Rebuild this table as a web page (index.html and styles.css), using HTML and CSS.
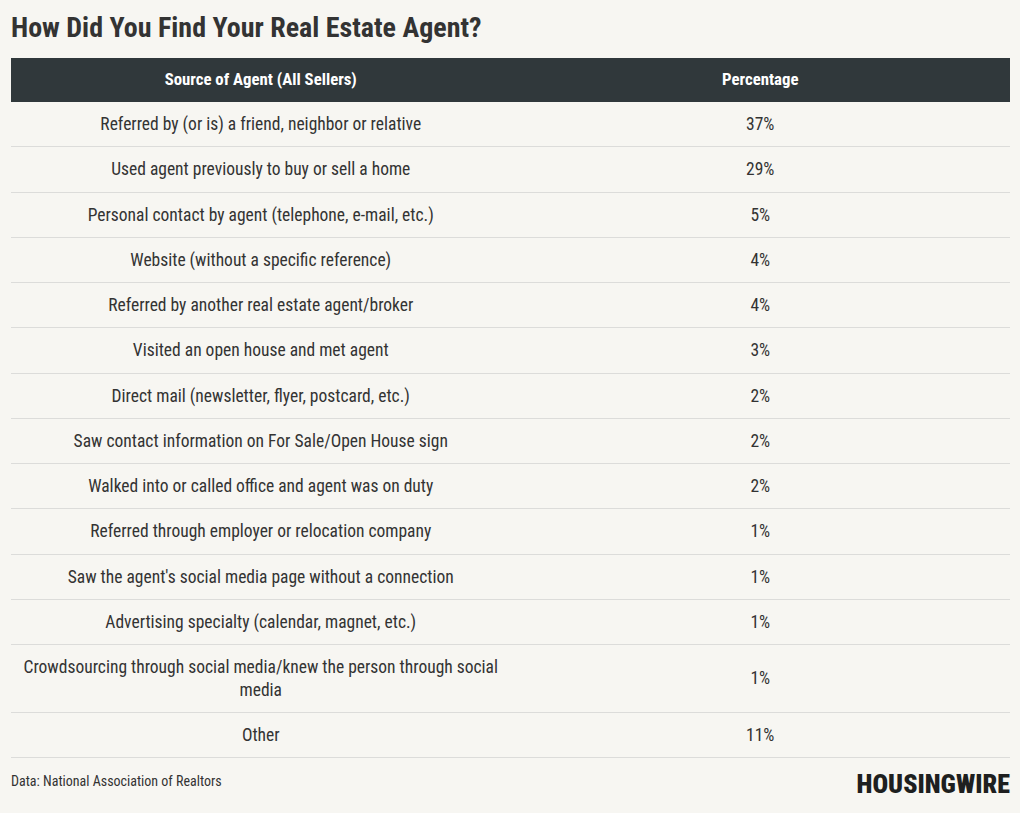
FILE: index.html
```html
<!DOCTYPE html>
<html lang="en">
<head>
<meta charset="utf-8">
<title>How Did You Find Your Real Estate Agent?</title>
<link rel="stylesheet" href="styles.css">
</head>
<body>
<div class="page">
  <h1 class="title">How Did You Find Your Real Estate Agent?</h1>
  <table class="data">
    <thead>
      <tr><th>Source of Agent (All Sellers)</th><th>Percentage</th></tr>
    </thead>
    <tbody>
      <tr><td>Referred by (or is) a friend, neighbor or relative</td><td>37%</td></tr>
      <tr><td>Used agent previously to buy or sell a home</td><td>29%</td></tr>
      <tr><td>Personal contact by agent (telephone, e-mail, etc.)</td><td>5%</td></tr>
      <tr><td>Website (without a specific reference)</td><td>4%</td></tr>
      <tr><td>Referred by another real estate agent/broker</td><td>4%</td></tr>
      <tr><td>Visited an open house and met agent</td><td>3%</td></tr>
      <tr><td>Direct mail (newsletter, flyer, postcard, etc.)</td><td>2%</td></tr>
      <tr><td>Saw contact information on For Sale/Open House sign</td><td>2%</td></tr>
      <tr><td>Walked into or called office and agent was on duty</td><td>2%</td></tr>
      <tr><td>Referred through employer or relocation company</td><td>1%</td></tr>
      <tr><td>Saw the agent's social media page without a connection</td><td>1%</td></tr>
      <tr><td>Advertising specialty (calendar, magnet, etc.)</td><td>1%</td></tr>
      <tr><td>Crowdsourcing through social media/knew the person through social media</td><td>1%</td></tr>
      <tr><td>Other</td><td>11%</td></tr>
    </tbody>
  </table>
  <div class="footer">
    <span class="source">Data: National Association of Realtors</span>
    <span class="logo">HOUSINGWIRE</span>
  </div>
</div>
</body>
</html>
```
FILE: styles.css
```css
html, body {
  margin: 0;
  padding: 0;
  background: #f7f6f2;
}
body {
  font-family: "Roboto Condensed", "Liberation Sans Narrow", "DejaVu Sans Condensed", Roboto, sans-serif;
  color: #333;
}
.page {
  padding: 11px 10px 0 11px;
}
.title {
  margin: 0;
  font-size: 28px;
  line-height: 34px;
  font-weight: 700;
  color: #333;
  padding-bottom: 13px;
}
.data {
  width: 999px;
  border-collapse: collapse;
  table-layout: fixed;
}
.data th {
  background: #30383b;
  color: #fff;
  font-size: 16.8px;
  font-weight: 700;
  height: 42px;
  padding: 0 10px 2px;
  text-align: center;
  width: 50%;
}
.data td {
  font-size: 17.5px;
  font-weight: 400;
  line-height: 22.75px;
  text-align: center;
  padding: 11px 12px 10.5px;
  border-bottom: 1px solid #dcdcda;
  color: #333;
}
.footer {
  display: flex;
  justify-content: space-between;
  align-items: flex-start;
  padding-top: 14px;
}
.source {
  font-size: 14px;
  line-height: 18px;
  font-weight: 400;
  color: #333;
}
.logo {
  font-size: 26px;
  font-weight: 900;
  line-height: 26px;
  color: #1e1f20;
  margin-top: -1px;
  letter-spacing: 0;
}
```
